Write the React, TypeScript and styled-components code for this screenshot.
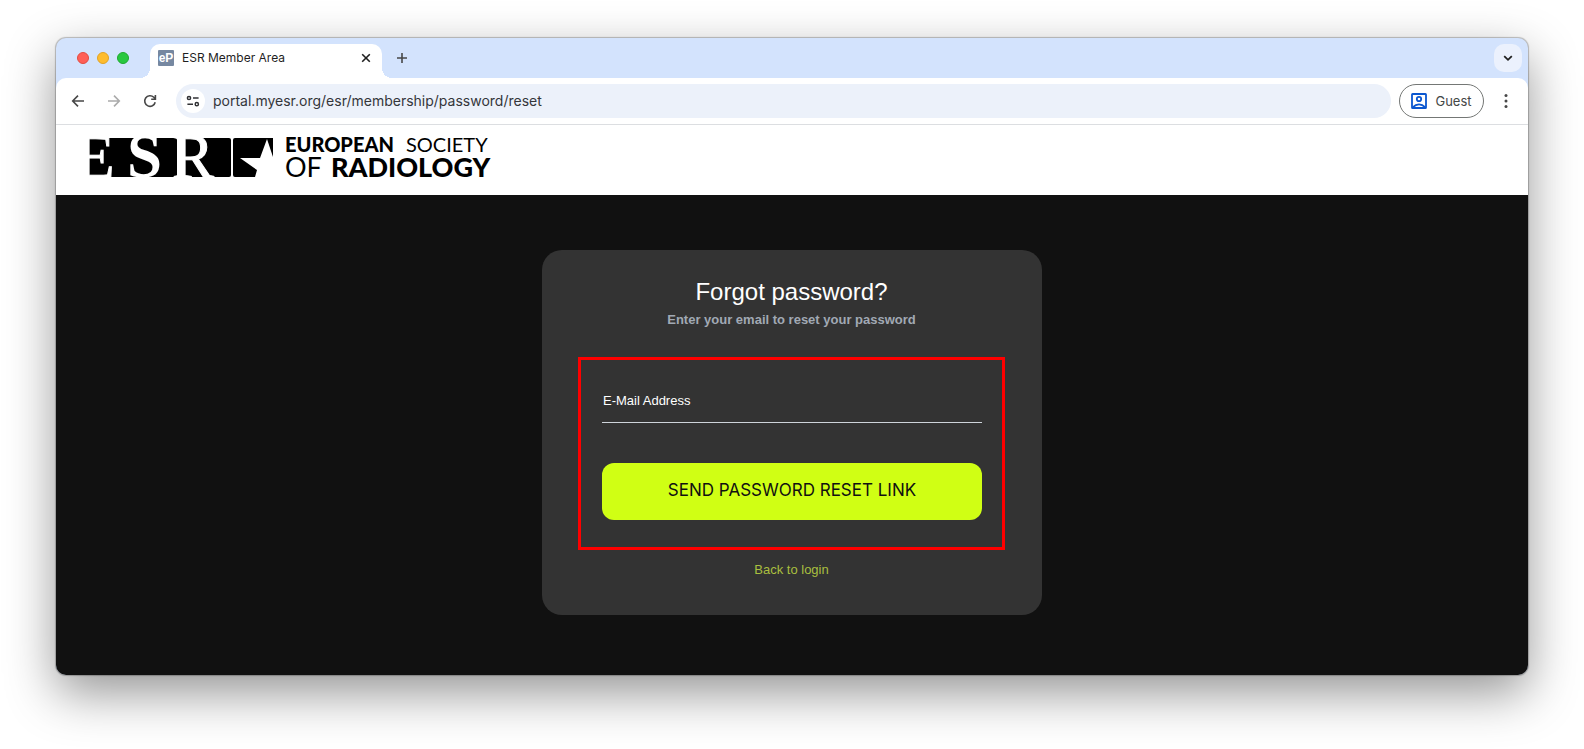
import React from "react";
import styled, { createGlobalStyle } from "styled-components";

const ui = '"Inter", "Roboto", sans-serif';
const page = '"Liberation Sans", Arial, sans-serif';

const GlobalStyle = createGlobalStyle`
  *, *::before, *::after { box-sizing: border-box; }
  body { margin: 0; background: #fff; font-family: ${page}; }
  button, input { font: inherit; }
`;

const Desktop = styled.div`
  min-height: 100vh;
  padding: 38px 56px 75px;
  display: flex;
  overflow: hidden;
`;

const BrowserWindow = styled.div`
  flex: 1;
  min-width: 0;
  display: flex;
  flex-direction: column;
  border-radius: 10px;
  background: #d3e3fd;
  box-shadow: 0 0 1px 1px rgba(0, 0, 0, 0.24), 0 18px 50px rgba(0, 0, 0, 0.42);
`;

const TabStrip = styled.div`
  height: 40px;
  padding: 6px 6px 0 21px;
  display: flex;
  align-items: flex-start;
`;

const Lights = styled.div`
  display: flex;
  gap: 8px;
  padding-top: 8px;
  margin-right: 21px;
`;

const Light = styled.button<{ $fill: string; $edge: string }>`
  width: 12px;
  height: 12px;
  padding: 0;
  border-radius: 50%;
  border: 1px solid ${(p) => p.$edge};
  background: ${(p) => p.$fill};
`;

const Tab = styled.div`
  position: relative;
  width: 232px;
  height: 34px;
  margin-right: 6px;
  padding: 0 8px 6px;
  display: flex;
  align-items: center;
  gap: 8px;
  border-radius: 10px 10px 0 0;
  background: #fff;
  font: 12px/16px ${ui};
  color: #1f1f1f;

  &::before,
  &::after {
    content: "";
    position: absolute;
    bottom: 0;
    width: 10px;
    height: 10px;
  }
  &::before {
    right: 100%;
    background: radial-gradient(circle at 0 0, transparent 10px, #fff 10px);
  }
  &::after {
    left: 100%;
    background: radial-gradient(circle at 100% 0, transparent 10px, #fff 10px);
  }
`;

const Favicon = styled.span`
  width: 16px;
  height: 16px;
  border-radius: 1px;
  background: #7688a1;
  color: #fff;
  font: bold 12px/16px ${page};
  text-align: center;
`;

const TabTitle = styled.span`
  flex: 1;
`;

const IconButton = styled.button<{ $size?: number; $tint?: string; $radius?: number; $color?: string }>`
  flex: none;
  width: ${(p) => p.$size ?? 28}px;
  height: ${(p) => p.$size ?? 28}px;
  padding: 0;
  border: 0;
  border-radius: ${(p) => p.$radius ?? 14}px;
  background: ${(p) => p.$tint ?? "transparent"};
  color: ${(p) => p.$color ?? "#474747"};
  display: flex;
  align-items: center;
  justify-content: center;
`;

const Spacer = styled.span`
  flex: 1;
`;

const Toolbar = styled.div`
  height: 47px;
  padding: 0 8px;
  display: flex;
  align-items: center;
  gap: 8px;
  background: #fff;
  border-bottom: 1px solid #dcdee1;
  border-radius: 10px 10px 0 0;
`;

const AddressBar = styled.div`
  flex: 1;
  height: 34px;
  margin-left: 4px;
  padding: 0 5px;
  display: flex;
  align-items: center;
  gap: 8px;
  border-radius: 17px;
  background: #ecf1fa;
`;

const UrlInput = styled.input`
  flex: 1;
  border: 0;
  padding: 0;
  background: transparent;
  font: 14px/20px ${ui};
  color: #34363a;
  outline: 0;
`;

const Guest = styled.button`
  width: 85px;
  height: 34px;
  padding: 0;
  display: flex;
  align-items: center;
  justify-content: center;
  gap: 8px;
  border: 1px solid #747775;
  border-radius: 17px;
  background: #fff;
  color: #444746;
  font: 13px/20px ${ui};
`;

const SiteHeader = styled.header`
  height: 70px;
  padding: 13px 32px 0;
  display: flex;
  align-items: flex-start;
  background: #fff;
`;

const LogoMark = styled.svg`
  flex: none;
  overflow: visible;
`;

const Main = styled.main`
  flex: 1;
  padding: 55px 20px 60px;
  display: flex;
  justify-content: center;
  align-items: flex-start;
  background: #111;
  border-radius: 0 0 10px 10px;
`;

const Card = styled.section`
  width: 500px;
  padding: 28px 37px 35px 36px;
  display: flex;
  flex-direction: column;
  border-radius: 20px;
  background: #333;
  text-align: center;
`;

const Title = styled.h1`
  margin: 0;
  font-size: 24px;
  line-height: 28px;
  font-weight: 400;
  color: #fff;
`;

const Subtitle = styled.p`
  margin: 4px 0 27px;
  font-size: 13px;
  line-height: 20px;
  font-weight: 700;
  color: #a1a9b4;
`;

const Form = styled.form`
  padding: 23px 20px 27px 21px;
  border: 3px solid #f00;
  display: flex;
  flex-direction: column;
`;

const EmailInput = styled.input`
  width: 100%;
  height: 40px;
  margin-bottom: 40px;
  padding: 0 1px 5px;
  border: 0;
  border-bottom: 1px solid #ced4da;
  border-radius: 0;
  background: transparent;
  font-size: 13px;
  line-height: 20px;
  color: #fff;
  outline: 0;

  &::placeholder {
    color: #fff;
    opacity: 1;
  }
`;

const Submit = styled.button`
  height: 57px;
  padding: 0 0 4px;
  border: 0;
  border-radius: 12px;
  background: #d0ff14;
  color: #111;
  font: 17px/24px ${ui};
  text-transform: uppercase;
`;

const BackLink = styled.a`
  margin-top: 10px;
  align-self: center;
  font-size: 13px;
  line-height: 20px;
  color: #a9bf3f;
  text-decoration: none;
`;

const Stroke = ({ d, width = 1.6 }: { d: string; width?: number }) => (
  <svg width="16" height="16" viewBox="0 0 16 16" fill="none" stroke="currentColor" strokeWidth={width} aria-hidden="true">
    <path d={d} />
  </svg>
);

const ReloadIcon = () => (
  <svg width="16" height="16" viewBox="0 0 16 16" fill="none" stroke="currentColor" strokeWidth="1.6" aria-hidden="true">
    <path d="M13.2 9.2A5.3 5.3 0 1 1 11.8 4.3L13.3 5.8M13.4 2V6.2H9.2" />
  </svg>
);

const TuneIcon = () => (
  <svg width="16" height="16" viewBox="0 0 16 16" fill="none" stroke="#303134" strokeWidth="1.5" aria-hidden="true">
    <circle cx="4" cy="5" r="1.6" />
    <path d="M8 5H13.6M2.4 11.2H8" />
    <circle cx="11.8" cy="11.2" r="1.6" />
  </svg>
);

const GuestIcon = () => (
  <svg width="16" height="16" viewBox="0 0 16 16" fill="none" stroke="#0b57d0" strokeWidth="1.8" aria-hidden="true">
    <rect x="1" y="1" width="14" height="14" rx="0.6" />
    <circle cx="8" cy="6" r="2.2" />
    <path d="M2 14.2C4 12 6 11.4 8 11.4S12 12 14 14.2" />
  </svg>
);

const DotsIcon = () => (
  <svg width="16" height="16" viewBox="0 0 16 16" fill="currentColor" aria-hidden="true">
    <circle cx="8" cy="2.5" r="1.5" />
    <circle cx="8" cy="8" r="1.5" />
    <circle cx="8" cy="13.5" r="1.5" />
  </svg>
);

const Logo = () => (
  <LogoMark width="406" height="40" viewBox="0 0 406 40" role="img" aria-label="European Society of Radiology">
    <rect width="89" height="39" rx="2" />
    <rect x="96" width="47" height="39" rx="2" />
    <g fill="#fff" stroke="#fff" fontFamily="Liberation Serif, serif" fontSize="63">
      <text x="-12" y="40">E</text>
      <text x="39" y="39" fontWeight="700" strokeWidth="0">S</text>
      <text x="84" y="40">R</text>
    </g>
    <path d="M147 0H185V19L179 1L172 20H152L169 32L167 39H147Q145 39 145 37V2Q145 0 147 0Z" />
    <g fontFamily="Lato, sans-serif">
      <text x="197" y="14" fontSize="20" fontWeight="900">EUROPEAN</text>
      <text x="318" y="14" fontSize="20">SOCIETY</text>
      <text x="197" y="39" fontSize="27">OF</text>
      <text x="243" y="39" fontSize="27" fontWeight="900">RADIOLOGY</text>
    </g>
  </LogoMark>
);

export default function App() {
  return (
    <>
      <GlobalStyle />
      <Desktop>
        <BrowserWindow>
          <TabStrip>
            <Lights>
              <Light aria-label="Close window" $fill="#ff5f57" $edge="#e24b41" />
              <Light aria-label="Minimize window" $fill="#febc2e" $edge="#e1a325" />
              <Light aria-label="Zoom window" $fill="#28c840" $edge="#1fa92f" />
            </Lights>
            <Tab>
              <Favicon>eP</Favicon>
              <TabTitle>ESR Member Area</TabTitle>
              <IconButton $size={16} $color="#1f1f1f" aria-label="Close tab">
                <Stroke d="M4.2 4.2L11.8 11.8M11.8 4.2L4.2 11.8" />
              </IconButton>
            </Tab>
            <IconButton aria-label="New tab">
              <Stroke d="M8 3V13M3 8H13" />
            </IconButton>
            <Spacer />
            <IconButton $tint="#ebf1fd" $radius={10} $color="#1f1f1f" aria-label="Search tabs">
              <Stroke width={1.8} d="M4.2 6.2L8 9.8L11.8 6.2" />
            </IconButton>
          </TabStrip>
          <Toolbar>
            <IconButton aria-label="Back">
              <Stroke d="M14 8H3M8 2.6L2.7 8L8 13.4" />
            </IconButton>
            <IconButton $color="#ababab" aria-label="Forward">
              <Stroke d="M2 8H13M8 2.6L13.3 8L8 13.4" />
            </IconButton>
            <IconButton aria-label="Reload">
              <ReloadIcon />
            </IconButton>
            <AddressBar>
              <IconButton $size={24} $tint="#fff" aria-label="Site information">
                <TuneIcon />
              </IconButton>
              <UrlInput aria-label="Address" defaultValue="portal.myesr.org/esr/membership/password/reset" />
            </AddressBar>
            <Guest>
              <GuestIcon />
              Guest
            </Guest>
            <IconButton aria-label="Menu">
              <DotsIcon />
            </IconButton>
          </Toolbar>
          <SiteHeader>
            <Logo />
          </SiteHeader>
          <Main>
            <Card>
              <Title>Forgot password?</Title>
              <Subtitle>Enter your email to reset your password</Subtitle>
              <Form>
                <EmailInput type="email" aria-label="E-Mail Address" placeholder="E-Mail Address" />
                <Submit type="button">Send password reset link</Submit>
              </Form>
              <BackLink href="#login">Back to login</BackLink>
            </Card>
          </Main>
        </BrowserWindow>
      </Desktop>
    </>
  );
}
